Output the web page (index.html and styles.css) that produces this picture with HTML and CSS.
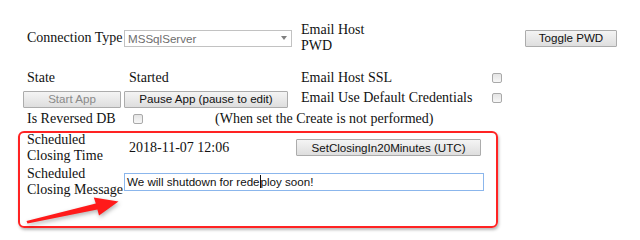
FILE: index.html
```html
<!DOCTYPE html>
<html>
<head>
<meta charset="utf-8">
<link rel="stylesheet" href="styles.css">
</head>
<body>
<div class="page">
  <div class="row r1">
    <div class="lbl">Connection Type</div>
    <div class="selwrap"><select class="sel" disabled><option>MSSqlServer</option></select></div>
    <div class="lbl">Email Host<br>PWD</div>
    <div></div>
    <div><button class="btn toggle">Toggle PWD</button></div>
  </div>
  <div class="row r2">
    <div class="lbl">State</div>
    <div class="lbl">Started</div>
    <div class="lbl">Email Host SSL</div>
    <div><input type="checkbox" class="cb cb4"></div>
    <div></div>
  </div>
  <div class="row r3">
    <div><button class="btn start" disabled>Start App</button></div>
    <div><button class="btn pause">Pause App (pause to edit)</button></div>
    <div class="lbl up">Email Use Default Credentials</div>
    <div class="up"><input type="checkbox" class="cb cb4"></div>
    <div></div>
  </div>
  <div class="row r4">
    <div class="lbl">Is Reversed DB</div>
    <div class="span3"><input type="checkbox" class="cb cb2"><span class="note">(When set the Create is not performed)</span></div>
  </div>
  <div class="row r5">
    <div class="lbl">Scheduled<br>Closing Time</div>
    <div class="lbl">2018-11-07 12:06</div>
    <div><button class="btn setclose">SetClosingIn20Minutes (UTC)</button></div>
    <div></div>
    <div></div>
  </div>
  <div class="row r6">
    <div class="lbl nowrap">Scheduled<br>Closing Message</div>
    <div class="span2"><div class="txt" role="textbox">We will shutdown for rede<span class="caret"></span>ploy soon!</div></div>
  </div>

  <div class="annot-box"></div>
  <svg class="annot-arrow" width="640" height="240" viewBox="0 0 640 240">
    <polygon points="26.5,221 95.8,203.6 93.8,197.5 118.5,201.5 99,215.5 97.4,209.4 27.5,223.5" fill="#ff1a1a"/>
  </svg>
</div>
</body>
</html>
```
FILE: styles.css
```css
html, body {
  margin: 0;
  padding: 0;
  background: #fff;
}
.page {
  position: relative;
  width: 640px;
  height: 240px;
  padding-top: 22px;
  padding-left: 23px;
  box-sizing: border-box;
  font-family: "Liberation Serif", "Times New Roman", serif;
  font-size: 14px;
  line-height: 16px;
  color: #111;
}
.row {
  display: grid;
  grid-template-columns: 101px 172px 194px 35px 100px;
  align-items: center;
}
.r1 { height: 32px; }
.r2 { height: 17px; margin-top: 15px; }
.r3 { height: 20px; margin-top: 3px; }
.r4 { height: 18px; margin-top: 1px; }
.r5 { height: 33px; margin-top: 3px; }
.r6 { height: 32px; margin-top: 2px; }
.lbl { padding-left: 4px; white-space: nowrap; }
.r1 .lbl:nth-child(3), .r2 .lbl:nth-child(3), .r3 .lbl, .r2 .lbl:nth-child(2), .r5 .lbl:nth-child(2) { padding-left: 5px; }
.up { padding-bottom: 3px; }
.span3 {
  grid-column: 2 / 5;
  display: flex;
  align-items: center;
}
.span2 { grid-column: 2 / 4; }
.note { margin-left: 72px; }

.btn {
  display: block;
  box-sizing: border-box;
  height: 17px;
  margin: 0;
  padding: 0;
  border: 1px solid #acacac;
  border-radius: 1px;
  background: linear-gradient(#f4f4f4, #dedede);
  font-family: "Liberation Sans", Arial, sans-serif;
  font-size: 11.6px;
  line-height: 14px;
  color: #111;
}
.toggle { width: 92px; }
.start { width: 98px; color: #8a8a8a; }
.pause { width: 164px; }
.setclose { width: 185px; }

.selwrap {
  position: relative;
  width: 168px;
  height: 17px;
}
.sel {
  appearance: none;
  -webkit-appearance: none;
  box-sizing: border-box;
  width: 168px;
  height: 17px;
  margin: 0;
  padding: 0 0 0 3px;
  border: 1px solid #c2c2c2;
  border-radius: 0;
  background: #fff;
  font-family: "Liberation Sans", Arial, sans-serif;
  font-size: 11.6px;
  color: #6d6d6d;
  opacity: 1;
}
.selwrap::after {
  content: "";
  position: absolute;
  left: 157px;
  top: 6px;
  border-left: 3px solid transparent;
  border-right: 3px solid transparent;
  border-top: 4px solid #808080;
}

.cb {
  appearance: none;
  -webkit-appearance: none;
  box-sizing: border-box;
  width: 10px;
  height: 10px;
  margin: 0;
  border: 1px solid #a9a9a9;
  border-radius: 2px;
  background: linear-gradient(#e4e4e4, #f7f7f7);
  display: block;
}
.cb4 { margin-left: 2px; }
.cb2 { margin-left: 9px; }

.txt {
  box-sizing: border-box;
  width: 360px;
  height: 18px;
  border: 1px solid #8bb6ec;
  padding-left: 2px;
  font-family: "Liberation Sans", Arial, sans-serif;
  font-size: 11.6px;
  line-height: 16px;
  color: #111;
  white-space: nowrap;
}
.caret {
  display: inline-block;
  width: 1px;
  height: 13px;
  background: #111;
  vertical-align: -2px;
}

.annot-box {
  position: absolute;
  left: 18px;
  top: 131px;
  width: 480px;
  height: 97px;
  box-sizing: border-box;
  border: 2px solid #ff2323;
  border-radius: 6px;
  box-shadow: 1px 2px 3px rgba(0,0,0,0.28);
  pointer-events: none;
}
.annot-arrow {
  position: absolute;
  left: 0;
  top: 0;
  pointer-events: none;
  filter: drop-shadow(1px 2px 2px rgba(0,0,0,0.3));
}
```
